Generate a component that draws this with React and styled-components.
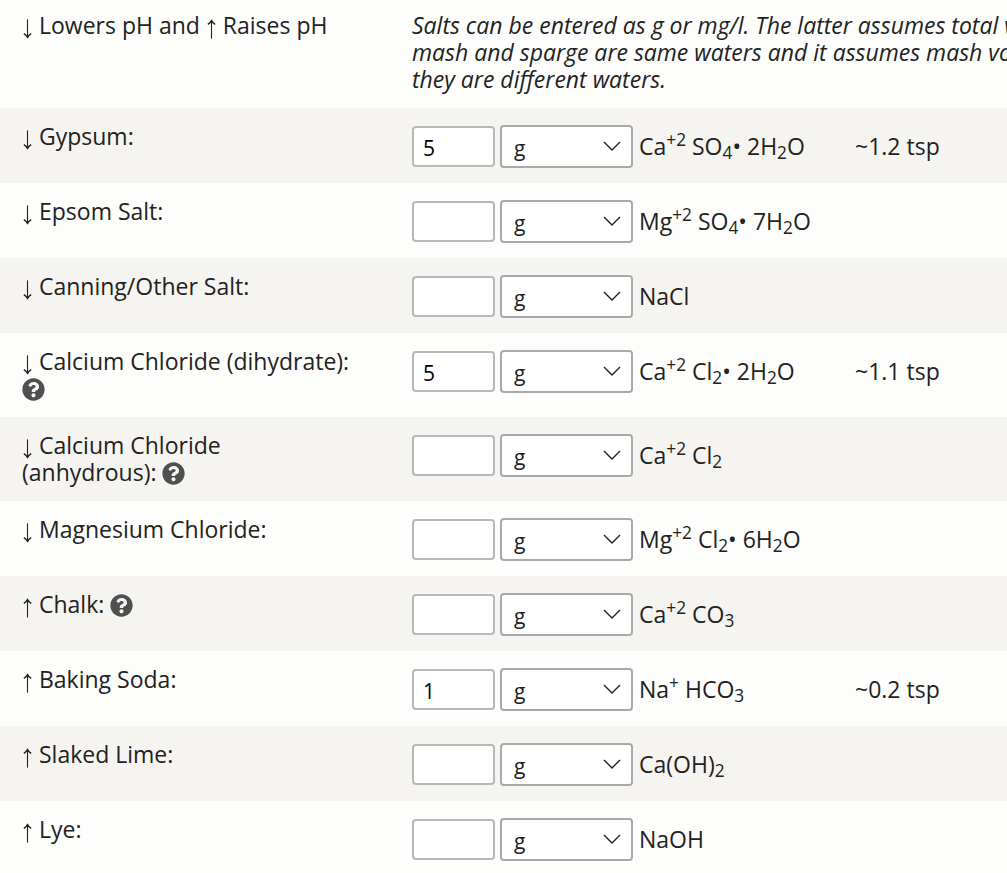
import React, { useState } from 'react';
import styled, { createGlobalStyle } from 'styled-components';
import { FaQuestionCircle } from 'react-icons/fa';

const salts = [
  { id: 'gypsum', effect: 'lowers', name: 'Gypsum:', amount: '5', formula: <>Ca<sup>+2</sup> SO<sub>4</sub>• 2H<sub>2</sub>O</>, volume: '~1.2 tsp' },
  { id: 'epsom', effect: 'lowers', name: 'Epsom Salt:', amount: '', formula: <>Mg<sup>+2</sup> SO<sub>4</sub>• 7H<sub>2</sub>O</> },
  { id: 'canning', effect: 'lowers', name: 'Canning/Other Salt:', amount: '', formula: <>NaCl</> },
  { id: 'dihydrate', effect: 'lowers', name: 'Calcium Chloride (dihydrate):', help: true, amount: '5', formula: <>Ca<sup>+2</sup> Cl<sub>2</sub>• 2H<sub>2</sub>O</>, volume: '~1.1 tsp' },
  { id: 'anhydrous', effect: 'lowers', name: 'Calcium Chloride (anhydrous):', help: true, amount: '', formula: <>Ca<sup>+2</sup> Cl<sub>2</sub></> },
  { id: 'magnesium', effect: 'lowers', name: 'Magnesium Chloride:', amount: '', formula: <>Mg<sup>+2</sup> Cl<sub>2</sub>• 6H<sub>2</sub>O</> },
  { id: 'chalk', effect: 'raises', name: 'Chalk:', help: true, amount: '', formula: <>Ca<sup>+2</sup> CO<sub>3</sub></> },
  { id: 'soda', effect: 'raises', name: 'Baking Soda:', amount: '1', formula: <>Na<sup>+</sup> HCO<sub>3</sub></>, volume: '~0.2 tsp' },
  { id: 'lime', effect: 'raises', name: 'Slaked Lime:', amount: '', formula: <>Ca(OH)<sub>2</sub></> },
  { id: 'lye', effect: 'raises', name: 'Lye:', amount: '', formula: <>NaOH</> },
];

const Arrow = ({ effect }) => (
  <ArrowSvg viewBox="0 0 12 21" role="img" aria-label={effect}>
    {effect === 'lowers' ? (
      <>
        <path d="M6 0v20" />
        <path d="M2 15.500q2.500 1.500 4 4q1.500-2.500 4-4" strokeWidth="1.600" />
      </>
    ) : (
      <>
        <path d="M6 21V1" />
        <path d="M2 5.500q2.500-1.500 4-4q1.500 2.500 4 4" strokeWidth="1.600" />
      </>
    )}
  </ArrowSvg>
);

const SaltRow = ({ salt }) => {
  const [amount, setAmount] = useState(salt.amount);
  const [unit, setUnit] = useState('g');

  return (
    <Row>
      <NameCell scope="row">
        <label htmlFor={salt.id}>
          <Arrow effect={salt.effect} /> {salt.name}
        </label>
        {salt.help && (
          <>
            {' '}
            <HelpButton type="button" aria-label="Help">
              <FaQuestionCircle size={23} />
            </HelpButton>
          </>
        )}
      </NameCell>
      <Cell>
        <Fields>
          <AmountInput id={salt.id} type="text" value={amount} onChange={(e) => setAmount(e.target.value)} />
          <SelectWrapper>
            <UnitSelect aria-label="Unit" value={unit} onChange={(e) => setUnit(e.target.value)}>
              <option value="g">g</option>
              <option value="mg/l">mg/l</option>
            </UnitSelect>
            <Chevron viewBox="0 0 18 10" aria-hidden="true">
              <path d="M1 1l8 8 8-8" />
            </Chevron>
          </SelectWrapper>
        </Fields>
      </Cell>
      <Cell>
        <Formula>{salt.formula}</Formula>
      </Cell>
      <Cell>
        <Formula>{salt.volume}</Formula>
      </Cell>
    </Row>
  );
};

const App = () => (
  <>
    <GlobalStyle />
    <Page>
      <SaltTable>
        <colgroup>
          <NameCol />
          <FieldsCol />
          <FormulaCol />
          <col />
        </colgroup>
        <thead>
          <tr>
            <HeadCell scope="col">
              <Arrow effect="lowers" /> Lowers pH and <Arrow effect="raises" /> Raises pH
            </HeadCell>
            <NoteCell colSpan={3}>
              Salts can be entered as g or mg/l. The latter assumes total volume if mash and sparge are same
              waters and it assumes mash volume if they are different waters.
            </NoteCell>
          </tr>
        </thead>
        <tbody>
          {salts.map((salt) => (
            <SaltRow key={salt.id} salt={salt} />
          ))}
        </tbody>
      </SaltTable>
    </Page>
  </>
);

export default App;

const GlobalStyle = createGlobalStyle`
  body {
    margin: 0;
    background-color: #fdfdfc;
    color: #222;
    font-family: 'Open Sans', 'Noto Sans', sans-serif;
    font-size: 23px;
    line-height: 27px;
  }
`;

const Page = styled.main`
  overflow: hidden;
`;

const SaltTable = styled.table`
  width: 100%;
  min-width: 1100px;
  table-layout: fixed;
  border-collapse: collapse;
`;

const NameCol = styled.col`
  width: 412px;
`;

const FieldsCol = styled.col`
  width: 227px;
`;

const FormulaCol = styled.col`
  width: 216px;
`;

const Row = styled.tr`
  &:nth-child(odd) {
    background-color: #f5f4f1;
  }
`;

const HeadCell = styled.th`
  padding: 12px 58px 15px 22px;
  font-weight: normal;
  text-align: left;
  vertical-align: top;
`;

const NoteCell = styled.td`
  padding: 12px 0 15px;
  font-style: italic;
`;

const NameCell = styled.th`
  padding: 15px 58px 15px 22px;
  font-weight: normal;
  text-align: left;
  vertical-align: top;
`;

const Cell = styled.td`
  padding: 17px 0 15px;
  vertical-align: top;
`;

const ArrowSvg = styled.svg`
  width: 11px;
  height: 20px;
  fill: none;
  stroke: #222;
  stroke-width: 1.200;
  vertical-align: -5px;
`;

const Fields = styled.div`
  display: flex;
  align-items: center;
  gap: 5px;
`;

const AmountInput = styled.input`
  box-sizing: border-box;
  width: 83px;
  height: 41px;
  padding: 2px 9px 0;
  border: 2px solid #b8b8b8;
  border-radius: 4px;
  background-color: #fff;
  color: #000;
  font: inherit;
  font-size: 21px;
`;

const SelectWrapper = styled.div`
  position: relative;
`;

const UnitSelect = styled.select`
  display: block;
  box-sizing: border-box;
  width: 133px;
  height: 43px;
  padding: 4px 36px 0 12px;
  border: 2px solid #a9a9a9;
  border-radius: 4px;
  background-color: #fff;
  color: #222;
  appearance: none;
  font: inherit;
  font-size: 21px;
`;

const Chevron = styled.svg`
  position: absolute;
  top: 16px;
  right: 12px;
  width: 18px;
  height: 10px;
  fill: none;
  stroke: #222;
  stroke-width: 1.400;
  pointer-events: none;
`;

const Formula = styled.div`
  padding-top: 8px;
  white-space: nowrap;

  sup,
  sub {
    position: relative;
    font-size: 75%;
    line-height: 0;
    vertical-align: baseline;
  }

  sup {
    top: -0.5em;
  }

  sub {
    bottom: -0.25em;
  }
`;

const HelpButton = styled.button`
  display: inline-block;
  padding: 0;
  border: 0;
  background: none;
  color: #4f4f4f;
  line-height: 0;
  vertical-align: -4px;
  cursor: pointer;
`;
